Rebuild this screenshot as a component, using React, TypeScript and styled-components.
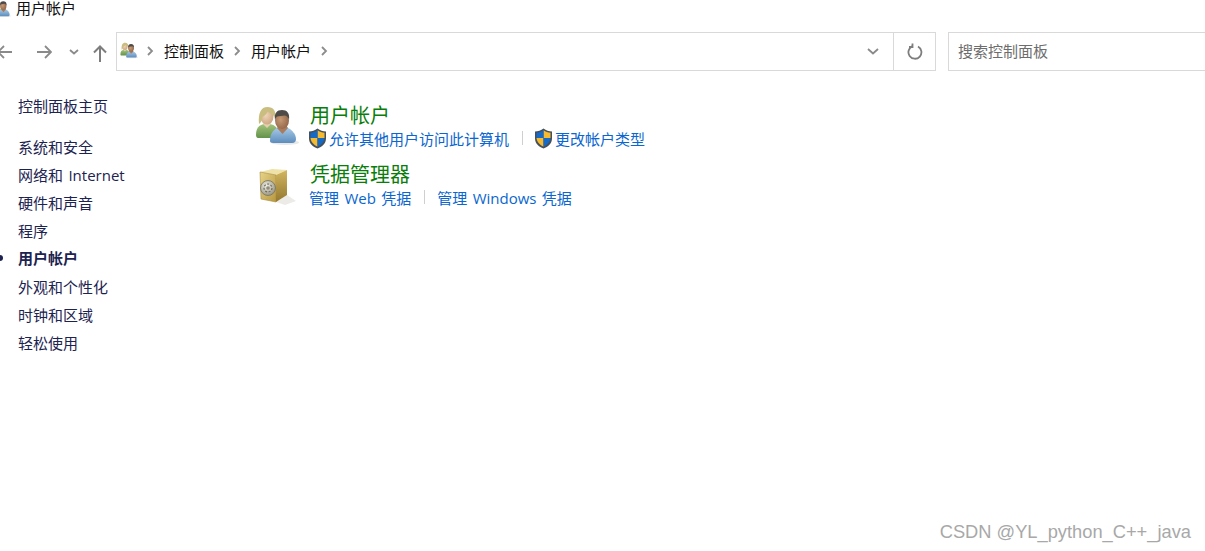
import styled, { createGlobalStyle } from "styled-components";

const navItems = ["系统和安全", "网络和 Internet", "硬件和声音", "程序", "用户帐户", "外观和个性化", "时钟和区域", "轻松使用"];

function UsersIcon({ width, id }: { width: number; id: string }) {
    return (
        <svg width={width} height={(width * 40) / 44} viewBox="0 0 44 40">
            <defs>
                <linearGradient id={`${id}-shirt`} x1="0" y1="0" x2="0" y2="1">
                    <stop offset="0" stopColor="#a3c47c" />
                    <stop offset="1" stopColor="#63924a" />
                </linearGradient>
                <linearGradient id={`${id}-blue`} x1="0" y1="0" x2="0" y2="1">
                    <stop offset="0" stopColor="#a6c8e6" />
                    <stop offset="1" stopColor="#5c8dbd" />
                </linearGradient>
                <radialGradient id={`${id}-skin`} cx="0.4" cy="0.4" r="0.7">
                    <stop offset="0" stopColor="#f0d6b8" />
                    <stop offset="1" stopColor="#c9a27e" />
                </radialGradient>
                <radialGradient id={`${id}-dark`} cx="0.4" cy="0.45" r="0.7">
                    <stop offset="0" stopColor="#c89a74" />
                    <stop offset="1" stopColor="#8a5f42" />
                </radialGradient>
            </defs>
            <path d="M1 30c0-7 3-10 8-11h6c5 1 8 4 8 8l-2 6H3c-1 0-2-1-2-3z" fill={`url(#${id}-shirt)`} />
            <path d="M8 19l4 4 4-4-1-3H9z" fill="#e6cfb0" />
            <ellipse cx="12" cy="11.500" rx="6.500" ry="8" fill={`url(#${id}-skin)`} />
            <path d="M4 19C3 8 6 2 12.500 2c6 0 8.500 4 8 10.500C18 10 15 8 12.500 6.500 11.500 10 8.500 11 7.500 12c0 3-1.500 5.500-3.500 7z" fill="#c9bd80" />
            <ellipse cx="30" cy="37.500" rx="14" ry="2.500" fill="#e8e8e8" />
            <path d="M15 36c0-7 3-11 7-13h11c4 2 8 6 8 11 0 2-1 4-4 4H18c-2 0-3-1-3-2z" fill={`url(#${id}-blue)`} />
            <path d="M22 23l5.500 6 5.500-6-2-3h-7z" fill="#a87c5c" />
            <ellipse cx="27" cy="15.500" rx="7" ry="8.500" fill={`url(#${id}-dark)`} />
            <path d="M20 15c-1-7 2-10 7-10s8 3 7 10c-1-3-2-4-4-4.500-3 .5-6 .5-8 1-1 1-1.500 2-2 3.500z" fill="#4d4a48" />
        </svg>
    );
}

function ShieldIcon() {
    return (
        <svg width="19" height="21" viewBox="0 0 19 21">
            <path d="M9.500 0.500c2.500 2 5.500 3 8.500 3v7c0 5-4 8.500-8.500 10C5 19 1 15.500 1 10.500v-7c3 0 6-1 8.500-3z" fill="#45505a" />
            <path d="M9.500 2.300c2.200 1.500 4.500 2.300 7 2.500v5.200H9.500z" fill="#f6ba30" />
            <path d="M9.500 2.300v7.700h-7V4.800c2.500-.2 4.800-1 7-2.500z" fill="#1569c7" />
            <path d="M2.500 10h7v8.500c-3.500-1.500-6.500-4.200-7-8.500z" fill="#f6ba30" />
            <path d="M9.500 10h7c-.5 4.300-3.500 7-7 8.500z" fill="#1569c7" />
        </svg>
    );
}

function SafeIcon() {
    return (
        <svg width="44" height="44" viewBox="0 0 44 44">
            <defs>
                <linearGradient id="safe-front" x1="0" y1="0" x2="1" y2="1">
                    <stop offset="0" stopColor="#e6d388" />
                    <stop offset="1" stopColor="#b8983f" />
                </linearGradient>
                <linearGradient id="safe-side" x1="0" y1="0" x2="0" y2="1">
                    <stop offset="0" stopColor="#d2b660" />
                    <stop offset="1" stopColor="#94782f" />
                </linearGradient>
                <radialGradient id="safe-dial" cx="0.4" cy="0.35" r="0.75">
                    <stop offset="0" stopColor="#efeee6" />
                    <stop offset="1" stopColor="#8d8a78" />
                </radialGradient>
            </defs>
            <path d="M21 37l11-7 9 6-11 4z" fill="#ecebe8" />
            <path d="M5 7l12-3 15 1-11 5z" fill="#efe2a6" />
            <path d="M5 7l16 3v27L6 34z" fill="url(#safe-front)" stroke="#a88c40" strokeWidth="0.600" />
            <path d="M21 10l11-5v25l-11 7z" fill="url(#safe-side)" />
            <circle cx="13" cy="23" r="7.500" fill="url(#safe-dial)" stroke="#77735f" strokeWidth="0.800" />
            <circle cx="13" cy="23" r="4" fill="none" stroke="#6f6b58" strokeWidth="1.200" strokeDasharray="2 1.500" />
            <circle cx="13" cy="23" r="1.800" fill="#8f8b78" />
        </svg>
    );
}

export default function App() {
    return (
        <Page>
            <GlobalStyle />
            <TitleBar>
                <TitleIcon>
                    <UsersIcon width={20} id="title" />
                </TitleIcon>
                <TitleText>用户帐户</TitleText>
            </TitleBar>

            <Toolbar>
                <NavButtons>
                    <BackIcon viewBox="0 0 16 16" width="16" height="16">
                        <path d="M15 8H1M7 2L1 8l6 6" />
                    </BackIcon>
                    <ForwardIcon viewBox="0 0 16 16" width="16" height="16">
                        <path d="M1 8h14M9 2l6 6-6 6" />
                    </ForwardIcon>
                    <SmallChevron viewBox="0 0 10 6" width="10" height="6">
                        <path d="M1 1l4 3.500L9 1" />
                    </SmallChevron>
                    <UpIcon viewBox="0 0 14 17" width="14" height="17">
                        <path d="M7 17V1.500M1 7.500l6-6 6 6" />
                    </UpIcon>
                </NavButtons>

                <AddressBar>
                    <Crumbs>
                        <CrumbIcon>
                            <UsersIcon width={18} id="crumb" />
                        </CrumbIcon>
                        <Chevron viewBox="0 0 7 10" width="7" height="10">
                            <path d="M1 1l4 4-4 4" />
                        </Chevron>
                        <Crumb>控制面板</Crumb>
                        <Chevron viewBox="0 0 7 10" width="7" height="10">
                            <path d="M1 1l4 4-4 4" />
                        </Chevron>
                        <Crumb>用户帐户</Crumb>
                        <Chevron viewBox="0 0 7 10" width="7" height="10">
                            <path d="M1 1l4 4-4 4" />
                        </Chevron>
                    </Crumbs>
                    <DropButton>
                        <SmallChevron viewBox="0 0 12 7" width="12" height="7">
                            <path d="M1 1l5 4.500L11 1" />
                        </SmallChevron>
                    </DropButton>
                    <RefreshButton>
                        <svg width="16" height="17" viewBox="0 0 16 17" fill="none" stroke="#7d7d7d" strokeWidth="1.800">
                            <path d="M5.500 3.200A6.500 6.500 0 1 0 11 3.500" />
                            <path d="M5.500 0.500v3.500H2" />
                        </svg>
                    </RefreshButton>
                </AddressBar>

                <SearchBox>搜索控制面板</SearchBox>
            </Toolbar>

            <Body>
                <Sidebar>
                    <HomeLink>控制面板主页</HomeLink>
                    <NavList>
                        {navItems.map((item) => (
                            <NavItem key={item} $active={item === "用户帐户"}>
                                {item}
                            </NavItem>
                        ))}
                    </NavList>
                </Sidebar>

                <Content>
                    <Section>
                        <SectionIcon $top={2}>
                            <UsersIcon width={44} id="section" />
                        </SectionIcon>
                        <div>
                            <Heading>用户帐户</Heading>
                            <Links>
                                <TaskLink>
                                    <ShieldWrap>
                                        <ShieldIcon />
                                    </ShieldWrap>
                                    允许其他用户访问此计算机
                                </TaskLink>
                                <Separator />
                                <TaskLink>
                                    <ShieldWrap>
                                        <ShieldIcon />
                                    </ShieldWrap>
                                    更改帐户类型
                                </TaskLink>
                            </Links>
                        </div>
                    </Section>
                    <Section>
                        <SectionIcon $top={3}>
                            <SafeIcon />
                        </SectionIcon>
                        <div>
                            <Heading>凭据管理器</Heading>
                            <Links>
                                <TaskLink>管理 Web 凭据</TaskLink>
                                <Separator />
                                <TaskLink>管理 Windows 凭据</TaskLink>
                            </Links>
                        </div>
                    </Section>
                </Content>
            </Body>

            <Watermark>CSDN @YL_python_C++_java</Watermark>
        </Page>
    );
}

const GlobalStyle = createGlobalStyle`
  html, body {
    margin: 0;
    padding: 0;
    background: #fff;
  }
`;

const Page = styled.div`
  position: relative;
  width: 1205px;
  height: 551px;
  overflow: hidden;
  background: #fff;
  font-family: "Open Sans", "Noto Sans CJK SC", sans-serif;
  font-size: 15px;
`;

const TitleBar = styled.div`
  display: flex;
  align-items: center;
  height: 16px;
  margin-bottom: 16px;
`;

const TitleIcon = styled.div`
  display: flex;
  margin-left: -9px;
`;

const TitleText = styled.span`
  margin-left: 5px;
  line-height: 16px;
  color: #111;
`;

const Toolbar = styled.div`
  display: flex;
  align-items: stretch;
  height: 39px;
`;

const NavButtons = styled.div`
  display: flex;
  align-items: center;
  width: 119px;
  margin-left: -3px;
  flex-shrink: 0;
`;

const BackIcon = styled.svg`
  fill: none;
  stroke: #8a8a8a;
  stroke-width: 1.800;
  margin-right: 23px;
`;

const ForwardIcon = styled(BackIcon)`
  margin-right: 17px;
`;

const SmallChevron = styled.svg`
  fill: none;
  stroke: #8a8a8a;
  stroke-width: 1.800;
`;

const UpIcon = styled.svg`
  fill: none;
  stroke: #7d7d7d;
  stroke-width: 2;
  margin-left: 14px;
  margin-top: 3px;
`;

const AddressBar = styled.div`
  display: flex;
  align-items: stretch;
  width: 820px;
  border: 1px solid #d9d9d9;
  box-sizing: border-box;
  flex-shrink: 0;
`;

const Crumbs = styled.div`
  flex: 1;
  display: flex;
  align-items: center;
  padding-left: 3px;
  padding-bottom: 2px;
`;

const CrumbIcon = styled.div`
  display: flex;
  margin-right: -1px;
`;

const Chevron = styled.svg`
  fill: none;
  stroke: #8c8c8c;
  stroke-width: 1.800;
  margin: 0 10px;
`;

const Crumb = styled.span`
  color: #111;
`;

const DropButton = styled.div`
  width: 40px;
  display: flex;
  align-items: center;
  justify-content: center;
`;

const RefreshButton = styled.div`
  width: 41px;
  display: flex;
  align-items: center;
  justify-content: center;
  border-left: 1px solid #d9d9d9;
`;

const SearchBox = styled.div`
  width: 270px;
  margin-left: 12px;
  flex-shrink: 0;
  display: flex;
  align-items: center;
  box-sizing: border-box;
  padding-left: 9px;
  padding-bottom: 2px;
  border: 1px solid #d9d9d9;
  color: #6d6d6d;
`;

const Body = styled.div`
  display: flex;
`;

const Sidebar = styled.div`
  width: 254px;
  padding-left: 18px;
  padding-top: 24px;
  box-sizing: border-box;
  flex-shrink: 0;
  color: #1c2350;
  word-spacing: 1.500px;
`;

const HomeLink = styled.div`
  line-height: 22px;
  margin-bottom: 19px;
`;

const NavList = styled.div`
  display: flex;
  flex-direction: column;
`;

const NavItem = styled.div<{ $active: boolean }>`
  position: relative;
  line-height: ${(props) => (props.$active ? 20 : 22)}px;
  height: 28px;
  font-weight: ${(props) => (props.$active ? 700 : 400)};

  ${(props) =>
    props.$active &&
    `&::before {
      content: "";
      position: absolute;
      left: -21px;
      top: 7px;
      width: 6px;
      height: 6px;
      border-radius: 50%;
      background: #1c2350;
    }`}
`;

const Content = styled.div`
  padding-top: 32px;
  display: flex;
  flex-direction: column;
  gap: 13px;
`;

const Section = styled.div`
  display: flex;
`;

const SectionIcon = styled.div<{ $top: number }>`
  width: 55px;
  margin-left: 1px;
  padding-top: ${(props) => props.$top}px;
  flex-shrink: 0;
`;

const Heading = styled.div`
  font-size: 20px;
  line-height: 26px;
  color: #0a7d0a;
`;

const Links = styled.div`
  display: flex;
  align-items: center;
  height: 22px;
  margin-top: -2px;
`;

const TaskLink = styled.span`
  display: inline-flex;
  align-items: center;
  gap: 2px;
  color: #0a66d0;
  margin-left: -1px;
  word-spacing: 1.500px;
  white-space: pre;
`;

const ShieldWrap = styled.span`
  display: flex;
  margin-left: -1px;
`;

const Separator = styled.span`
  width: 1px;
  height: 14px;
  background: #cfcfcf;
  margin: 0 13px;
`;

const Watermark = styled.div`
  position: absolute;
  right: 14px;
  bottom: 8px;
  font-family: "Liberation Sans", sans-serif;
  font-size: 18.300px;
  color: #a8a8a8;
`;
